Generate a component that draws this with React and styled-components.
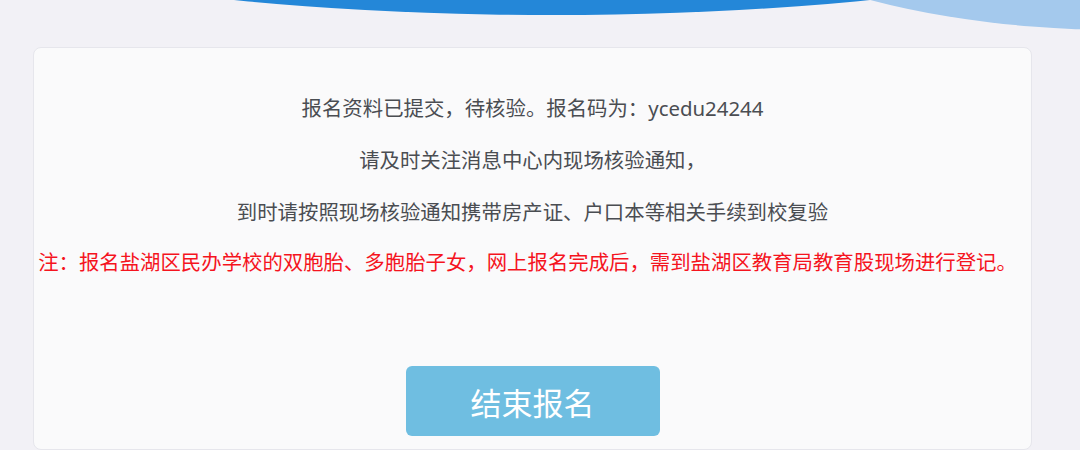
import styled, { createGlobalStyle } from 'styled-components';

const GlobalStyle = createGlobalStyle`
  html, body {
    margin: 0;
    padding: 0;
    background: #f2f1f6;
    font-family: "Noto Sans", "Noto Sans CJK SC", sans-serif;
  }
`;

const Page = styled.div`
  width: 1080px;
  height: 450px;
  overflow: hidden;
  display: flex;
  flex-direction: column;
`;

const Header = styled.div`
  height: 47px;
  flex-shrink: 0;
  svg {
    display: block;
  }
`;

const Card = styled.div`
  margin: 0 48px 0 33px;
  background: #fafafb;
  border: 1px solid #e6e6ec;
  border-radius: 8px;
  flex: 1;
  display: flex;
  flex-direction: column;
  align-items: center;
  padding-top: 44px;
`;

const Line = styled.p`
  margin: 0;
  height: 52px;
  line-height: 32px;
  font-size: 20.4px;
  color: ${(p) => (p.$warn ? '#f5141e' : '#4a4d52')};
  text-align: center;
  white-space: nowrap;
  ${(p) => p.$warn && 'margin-left: -10px; margin-top: -2px;'}
`;

const FinishButton = styled.button`
  margin-top: 68px;
  width: 254px;
  height: 70px;
  border: none;
  border-radius: 6px;
  background: #6fbee1;
  color: #fff;
  font-family: "Noto Sans", "Noto Sans CJK SC", sans-serif;
  font-size: 31px;
  cursor: pointer;
`;

export default function App() {
  return (
    <Page>
      <GlobalStyle />
      <Header>
        <svg width="1080" height="47" viewBox="0 0 1080 47">
          <ellipse cx="1120" cy="-150" rx="452" ry="180" fill="#a4c9ed" />
          <ellipse cx="552" cy="-100" rx="644" ry="115" fill="#2487d8" />
        </svg>
      </Header>
      <Card>
        <Line>报名资料已提交，待核验。报名码为：ycedu24244</Line>
        <Line>请及时关注消息中心内现场核验通知，</Line>
        <Line>到时请按照现场核验通知携带房产证、户口本等相关手续到校复验</Line>
        <Line $warn>注：报名盐湖区民办学校的双胞胎、多胞胎子女，网上报名完成后，需到盐湖区教育局教育股现场进行登记。</Line>
        <FinishButton>结束报名</FinishButton>
      </Card>
    </Page>
  );
}
